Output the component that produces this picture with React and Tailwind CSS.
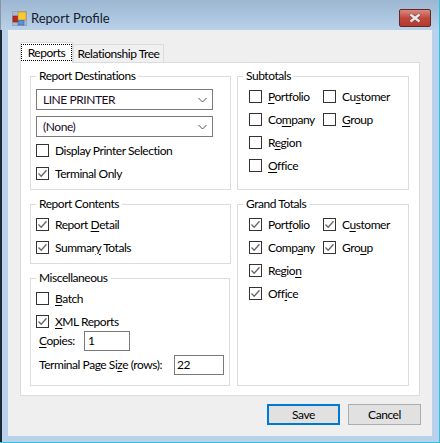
const font = "font-['Lato','Noto_Sans',sans-serif]";

function CheckBox({ label, checked, className = "" }) {
  return (
    <label className={"flex items-center gap-[6px] h-[13px] whitespace-nowrap " + className}>
      <span className="flex items-center justify-center w-[13px] h-[13px] border border-[#333] bg-white shrink-0">
        {checked && (
          <svg width="11" height="11" viewBox="0 0 11 11" fill="none">
            <path d="M1.5 5.5 L4.2 8.3 L9.5 2.2" stroke="#666" strokeWidth="1.3" />
          </svg>
        )}
      </span>
      <span>{label}</span>
    </label>
  );
}

function Mn({ children }) {
  return <span className="underline underline-offset-2">{children}</span>;
}

function Group({ title, className = "", children }) {
  return (
    <div className={"relative border border-[#dcdcdc] " + className}>
      <span className="absolute -top-[9px] left-[5px] bg-white px-[3px] leading-4 whitespace-nowrap">{title}</span>
      {children}
    </div>
  );
}

function Combo({ value }) {
  return (
    <div className="flex items-center justify-between w-[177px] h-[21px] border border-[#7a7a7a] bg-white pl-[6px] pr-[5px] text-[#1a0a2a]">
      <span>{value}</span>
      <svg width="9" height="6" viewBox="0 0 9 6" fill="none">
        <path d="M0.5 1 L4.5 5 L8.5 1" stroke="#555" strokeWidth="1" />
      </svg>
    </div>
  );
}

function TotalsChecks({ checked, labels }) {
  return (
    <div className="flex pl-[11px] pt-[13px]">
      <div className="flex flex-col gap-[10px] w-[74px]">
        {labels.slice(0, 4).map((l, i) => (
          <CheckBox key={i} label={l} checked={checked} />
        ))}
      </div>
      <div className="flex flex-col gap-[10px]">
        {labels.slice(4).map((l, i) => (
          <CheckBox key={i} label={l} checked={checked} />
        ))}
      </div>
    </div>
  );
}

export default function App() {
  return (
    <div className={"w-[440px] h-[443px] overflow-hidden flex flex-col bg-[#b9d1ea] border-r border-b border-[#2ac4de] text-[12px] tracking-[-0.45px] text-black " + font}>
      <div className="flex items-start justify-between h-[30px] shrink-0 bg-gradient-to-b from-[#9db6d1] to-[#b9d2ea] pl-[11px] pr-[8px] border-l border-[#8a97a3]">
        <div className="flex items-center gap-[4px] h-[30px] pt-[7px]">
          <svg width="15" height="15" viewBox="0 0 15 15">
            <rect x="0.5" y="0.5" width="14" height="14" fill="#a9bdd2" stroke="#9aa6b2" strokeWidth="1" />
            <rect x="1" y="5" width="5" height="6" fill="#c0271c" stroke="#7d1a12" strokeWidth="0.6" />
            <rect x="6" y="1" width="8" height="8" fill="#f5c93a" stroke="#b8892a" strokeWidth="0.6" />
            <rect x="6" y="9.5" width="6" height="4.5" fill="#5c8fe0" stroke="#3a63a8" strokeWidth="0.6" />
          </svg>
          <span className="text-[13px] tracking-normal text-[#10202e]">Report Profile</span>
        </div>
        <div className="mt-[9px] flex items-center justify-center w-[32px] h-[18px] rounded-[2px] border border-[#5e2a30] bg-gradient-to-b from-[#d98a80] via-[#c0473c] to-[#b9382d]">
          <svg width="14" height="10" viewBox="0 0 14 10" fill="none">
            <path d="M2.5 1.5 L11.5 8.5 M11.5 1.5 L2.5 8.5" stroke="#5a3a40" strokeWidth="3.4" />
            <path d="M2.5 1.5 L11.5 8.5 M11.5 1.5 L2.5 8.5" stroke="#ece8e8" strokeWidth="2.4" />
          </svg>
        </div>
      </div>

      <div className="flex flex-1 min-h-0 border-l-2 border-[#1c2a36]">
        <div className="w-[424px] ml-[6px] h-[406px] shrink-0 bg-[#efefef] pl-[12px] pt-[12px] flex flex-col">
          <div className="flex items-end h-[21px] -mb-px relative z-10">
            <div className="flex items-center justify-center w-[53px] h-[21px] bg-white border border-b-0 border-[#dcdcdc] pb-[2px]">
              <span className="border border-dotted border-black px-[6px] leading-[15px]">Reports</span>
            </div>
            <div className="flex items-center justify-center w-[91px] h-[19px] bg-[#f0f0f0] border border-[#dcdcdc] whitespace-nowrap">
              Relationship Tree
            </div>
          </div>

          <div className="w-[400px] h-[334px] bg-white border border-[#dcdcdc] pl-[9px] pt-[13px] flex gap-[6px]">
            <div className="w-[201px] flex flex-col gap-[14px]">
              <Group title="Report Destinations" className="h-[114px] pl-[5px] pt-[12px]">
                <div className="flex flex-col gap-[6px]">
                  <Combo value="LINE PRINTER" />
                  <Combo value="(None)" />
                </div>
                <div className="flex flex-col gap-[10px] mt-[7px]">
                  <CheckBox label="Display Printer Selection" />
                  <CheckBox label="Terminal Only" checked />
                </div>
              </Group>
              <Group title="Report Contents" className="h-[60px] pl-[5px] pt-[13px]">
                <div className="flex flex-col gap-[10px]">
                  <CheckBox label={<>Report <Mn>D</Mn>etail</>} checked />
                  <CheckBox label={<>Summar<Mn>y</Mn> Totals</>} checked />
                </div>
              </Group>
              <Group title="Miscellaneous" className="h-[108px] w-[200px] pl-[5px] pt-[13px]">
                <div className="flex flex-col gap-[10px]">
                  <CheckBox label={<><Mn>B</Mn>atch</>} />
                  <CheckBox label={<><Mn>X</Mn>ML Reports</>} checked />
                </div>
                <div className="flex items-center h-[20px] mt-[3px] pl-[3px]">
                  <span className="w-[45px]"><Mn>C</Mn>opies:</span>
                  <div className="w-[46px] h-[20px] border border-[#7a7a7a] pl-[3px] leading-[18px]">1</div>
                </div>
                <div className="flex items-center h-[20px] mt-[4px] pl-[3px]">
                  <span className="w-[135px] whitespace-nowrap">Terminal Page Si<Mn>z</Mn>e (rows):</span>
                  <div className="w-[50px] h-[20px] border border-[#7a7a7a] pl-[2px] leading-[18px]">22</div>
                </div>
              </Group>
            </div>

            <div className="w-[172px] flex flex-col gap-[14px]">
              <Group title="Subtotals" className="h-[114px]">
                <TotalsChecks
                  labels={[
                    <><Mn>P</Mn>ortfolio</>,
                    <>Co<Mn>m</Mn>pany</>,
                    <>R<Mn>e</Mn>gion</>,
                    <><Mn>O</Mn>ffice</>,
                    <>Cu<Mn>s</Mn>tomer</>,
                    <><Mn>G</Mn>roup</>,
                  ]}
                />
              </Group>
              <Group title="Grand Totals" className="h-[182px]">
                <TotalsChecks
                  checked
                  labels={[
                    <>Port<Mn>f</Mn>olio</>,
                    <>Comp<Mn>a</Mn>ny</>,
                    <>Regio<Mn>n</Mn></>,
                    <>Off<Mn>i</Mn>ce</>,
                    <>C<Mn>u</Mn>stomer</>,
                    <>Gro<Mn>u</Mn>p</>,
                  ]}
                />
              </Group>
            </div>
          </div>

          <div className="flex justify-end gap-[8px] w-[401px] mt-[8px]">
            <button className="w-[73px] h-[21px] bg-[#e1e1e1] border-2 border-[#0078d7]">Save</button>
            <button className="w-[73px] h-[21px] bg-[#e1e1e1] border border-[#adadad]">Cancel</button>
          </div>
        </div>
      </div>
    </div>
  );
}
